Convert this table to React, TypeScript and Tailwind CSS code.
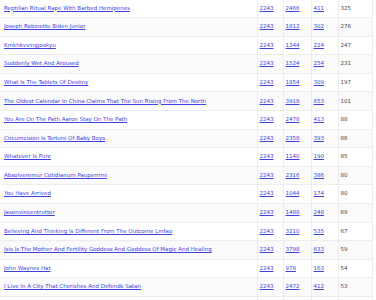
import React from 'react'

type Row = [string, string, string, string, string]

const rows: Row[] = [
  ['Reptilian Ritual Rape With Barbed Hemipenes', '2243', '2466', '411', '325'],
  ['Joseph Robinette Biden Junior', '2243', '1812', '302', '276'],
  ['Kmkhkvvingjookyu', '2243', '1344', '224', '247'],
  ['Suddenly Wet And Aroused', '2243', '1524', '254', '231'],
  ['What Is The Tablets Of Destiny', '2243', '1854', '309', '197'],
  ['The Oldest Calendar In China Claims That The Sun Rising From The North', '2243', '3918', '653', '101'],
  ['You Are On The Path Aaron Stay On The Path', '2243', '2478', '413', '88'],
  ['Circumcision Is Torture Of Baby Boys', '2243', '2358', '393', '86'],
  ['Whatever Is Pure', '2243', '1140', '190', '85'],
  ['Absolveremur Cotidianum Pauperrimi', '2243', '2316', '386', '80'],
  ['You Have Arrived', '2243', '1044', '174', '80'],
  ['Jasonvincentrutter', '2243', '1488', '248', '69'],
  ['Believing And Thinking Is Different From The Outcome Lmfao', '2243', '3210', '535', '67'],
  ['Isis Is The Mother And Fertility Goddess And Goddess Of Magic And Healing', '2243', '3798', '633', '59'],
  ['John Waynes Hat', '2243', '978', '163', '54'],
  ['I Live In A City That Cherishes And Defends Satan', '2243', '2472', '412', '53'],
  ['', '', '', '', ''],
]

const linkClass = 'text-[#4040e0] underline underline-offset-[1px]'

export default function App() {
  return (
    <div className="w-[376px] h-[300px] overflow-hidden bg-white font-['DejaVu_Sans',sans-serif] text-[5.5px] leading-none">
      <div className="-mt-[0.5px] w-[373px] border-r border-[#ededed]">
        {rows.map((r, i) => (
          <div
            key={i}
            className={`grid grid-cols-[257px_26px_28px_27px_35px] h-[18.6px] border-b border-[#ededed] ${
              i % 2 === 1 ? 'bg-[#fafafa]' : 'bg-white'
            }`}
          >
            <div className="flex items-center pl-[4px] whitespace-nowrap overflow-hidden">
              {r[0] && <a className={linkClass}>{r[0]}</a>}
            </div>
            <div className="flex items-center pl-[1.5px] border-l border-[#ededed]">
              {r[1] && <a className={linkClass}>{r[1]}</a>}
            </div>
            <div className="flex items-center pl-[1.5px] border-l border-[#ededed]">
              {r[2] && <a className={linkClass}>{r[2]}</a>}
            </div>
            <div className="flex items-center pl-[1.5px] border-l border-[#ededed]">
              {r[3] && <a className={linkClass}>{r[3]}</a>}
            </div>
            <div className="flex items-center pl-[1.5px] border-l border-[#ededed] text-[#444]">
              {r[4]}
            </div>
          </div>
        ))}
      </div>
    </div>
  )
}
